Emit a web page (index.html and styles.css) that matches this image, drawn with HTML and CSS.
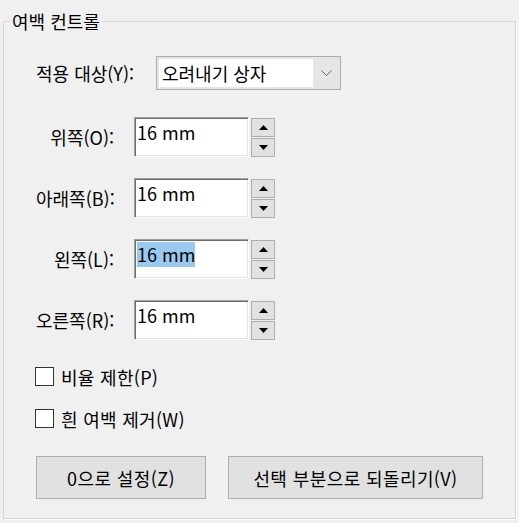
FILE: index.html
```html
<!DOCTYPE html>
<html lang="ko">
<head>
<meta charset="utf-8">
<title>여백 컨트롤</title>
<link rel="stylesheet" href="styles.css">
</head>
<body>
<fieldset class="group">
  <legend class="group-title">여백 컨트롤</legend>
  <div class="group-body">
    <div class="combo-row">
      <span class="combo-label">적용 대상(Y):</span>
      <div class="combo">
        <span class="combo-value">오려내기 상자</span>
        <span class="combo-arrow"><svg width="11" height="6" viewBox="0 0 11 6"><polyline points="0.5,0.5 5.5,5.5 10.5,0.5" fill="none" stroke="#606060" stroke-width="1"/></svg></span>
      </div>
    </div>

    <div class="spin-list">
      <div class="spin-row">
        <span class="spin-label">위쪽(O):</span>
        <div class="spin-field"><span class="spin-text">16 mm</span></div>
        <div class="spin-buttons">
          <span class="spin-btn"><svg width="9" height="5" viewBox="0 0 9 5"><polygon points="4.5,0 9,5 0,5" fill="#000"/></svg></span>
          <span class="spin-btn"><svg width="9" height="5" viewBox="0 0 9 5"><polygon points="0,0 9,0 4.5,5" fill="#000"/></svg></span>
        </div>
      </div>
      <div class="spin-row">
        <span class="spin-label">아래쪽(B):</span>
        <div class="spin-field"><span class="spin-text">16 mm</span></div>
        <div class="spin-buttons">
          <span class="spin-btn"><svg width="9" height="5" viewBox="0 0 9 5"><polygon points="4.5,0 9,5 0,5" fill="#000"/></svg></span>
          <span class="spin-btn"><svg width="9" height="5" viewBox="0 0 9 5"><polygon points="0,0 9,0 4.5,5" fill="#000"/></svg></span>
        </div>
      </div>
      <div class="spin-row">
        <span class="spin-label">왼쪽(L):</span>
        <div class="spin-field"><span class="spin-text selected">16 mm</span></div>
        <div class="spin-buttons">
          <span class="spin-btn"><svg width="9" height="5" viewBox="0 0 9 5"><polygon points="4.5,0 9,5 0,5" fill="#000"/></svg></span>
          <span class="spin-btn"><svg width="9" height="5" viewBox="0 0 9 5"><polygon points="0,0 9,0 4.5,5" fill="#000"/></svg></span>
        </div>
      </div>
      <div class="spin-row">
        <span class="spin-label">오른쪽(R):</span>
        <div class="spin-field"><span class="spin-text">16 mm</span></div>
        <div class="spin-buttons">
          <span class="spin-btn"><svg width="9" height="5" viewBox="0 0 9 5"><polygon points="4.5,0 9,5 0,5" fill="#000"/></svg></span>
          <span class="spin-btn"><svg width="9" height="5" viewBox="0 0 9 5"><polygon points="0,0 9,0 4.5,5" fill="#000"/></svg></span>
        </div>
      </div>
    </div>

    <div class="checks">
      <div class="check-row"><span class="check-box"></span><span class="check-label">비율 제한(P)</span></div>
      <div class="check-row"><span class="check-box"></span><span class="check-label">흰 여백 제거(W)</span></div>
    </div>

    <div class="actions">
      <span class="btn btn-zero">0으로 설정(Z)</span>
      <span class="btn btn-revert">선택 부분으로 되돌리기(V)</span>
    </div>
  </div>
</fieldset>
</body>
</html>
```

FILE: styles.css
```css
html, body {
  margin: 0;
  padding: 0;
  background: #f0f0f0;
}

body {
  font-family: "Noto Sans CJK KR", "Noto Sans", sans-serif;
  font-size: 18px;
  color: #000;
  width: 519px;
  height: 523px;
  overflow: hidden;
}

.group {
  box-sizing: border-box;
  margin: 9px 3px 0 3px;
  padding: 0;
  height: 510px;
  border: 1px solid #d5d5d5;
  box-shadow: 1px 1px 0 #fcfcfc;
}

.group-title {
  margin-left: 6px;
  padding: 0 2px;
  line-height: 25px;
  font-size: 18px;
}

.group-body {
  padding: 22px 0 0 32px;
}

.combo-row {
  display: flex;
  align-items: center;
  height: 34px;
}

.combo-label {
  width: 100px;
  margin-right: 20px;
  white-space: nowrap;
}

.combo {
  box-sizing: border-box;
  display: flex;
  width: 185px;
  height: 34px;
  padding: 2px 0 2px 2px;
  border: 1px solid #adadad;
  background: #e5e5e5;
}

.combo-value {
  flex: 1;
  background: #fff;
  padding-left: 3px;
  line-height: 28px;
  white-space: nowrap;
}

.combo-arrow {
  width: 27px;
  display: flex;
  align-items: center;
  justify-content: center;
}

.spin-list {
  margin-top: 27px;
  display: flex;
  flex-direction: column;
  gap: 21px;
}

.spin-row {
  display: flex;
  align-items: center;
  height: 40px;
}

.spin-label {
  width: 78px;
  margin-right: 20px;
  text-align: right;
  white-space: nowrap;
}

.spin-field {
  box-sizing: border-box;
  width: 115px;
  height: 40px;
  padding: 2px;
  background: #fff;
  border: 1px solid;
  border-color: #a0a0a0 #ffffff #ffffff #a0a0a0;
  box-shadow: inset 1px 1px 0 #6d6d6d, inset -1px -1px 0 #e3e3e3;
  line-height: 25px;
}

.spin-text {
  display: inline-block;
}

.spin-text.selected {
  background: #99c9ef;
}

.spin-buttons {
  box-sizing: border-box;
  align-self: flex-start;
  height: 40px;
  margin-left: 2px;
  padding-top: 1px;
  display: flex;
  flex-direction: column;
  gap: 1px;
}

.spin-btn {
  box-sizing: border-box;
  width: 24px;
  height: 19px;
  border: 1px solid #adadad;
  background: #e1e1e1;
  display: flex;
  align-items: center;
  justify-content: center;
}

.checks {
  margin-top: 27px;
  display: flex;
  flex-direction: column;
  gap: 23px;
}

.check-row {
  display: flex;
  align-items: center;
  height: 19px;
}

.check-box {
  box-sizing: border-box;
  width: 19px;
  height: 19px;
  margin-left: -1px;
  margin-right: 7px;
  border: 1px solid #333;
  background: #fff;
}

.check-label {
  white-space: nowrap;
  letter-spacing: 0.3px;
}

.actions {
  margin-top: 28px;
  display: flex;
  gap: 22px;
}

.btn {
  box-sizing: border-box;
  height: 43px;
  border: 1px solid #adadad;
  background: #e1e1e1;
  display: flex;
  align-items: center;
  justify-content: center;
  white-space: nowrap;
  letter-spacing: 0.4px;
}

.btn-zero {
  width: 170px;
}

.btn-revert {
  width: 255px;
}
```
